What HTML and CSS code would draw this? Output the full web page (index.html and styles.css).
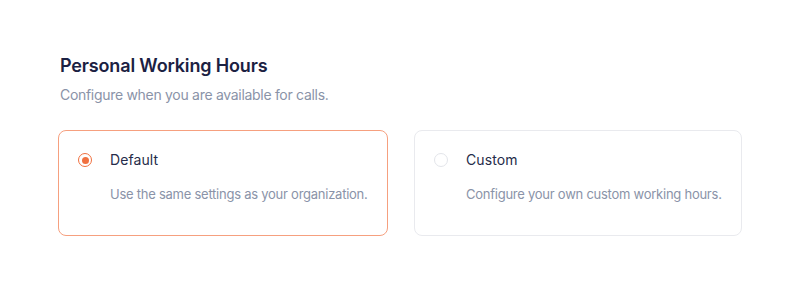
FILE: index.html
```html
<!DOCTYPE html>
<html>
<head>
<meta charset="utf-8">
<link rel="stylesheet" href="styles.css">
</head>
<body>
<main class="page">
  <h1 class="title">Personal Working Hours</h1>
  <p class="subtitle">Configure when you are available for calls.</p>
  <div class="options">
    <div class="card selected">
      <div class="row">
        <span class="radio checked"><span class="dot"></span></span>
        <span class="label">Default</span>
      </div>
      <p class="desc">Use the same settings as your organization.</p>
    </div>
    <div class="card">
      <div class="row">
        <span class="radio"></span>
        <span class="label">Custom</span>
      </div>
      <p class="desc">Configure your own custom working hours.</p>
    </div>
  </div>
</main>
</body>
</html>
```
FILE: styles.css
```css
* { box-sizing: border-box; }
html, body { margin: 0; padding: 0; background: #ffffff; }
body { font-family: Inter, "Noto Sans", sans-serif; }
.page { padding: 54px 58px 0 58px; width: 800px; }
.title {
  margin: 0 0 0 2px;
  font-size: 18px;
  line-height: 24px;
  font-weight: 600;
  color: #1b2142;
  letter-spacing: -0.15px;
}
.subtitle {
  margin: 7px 0 0 2px;
  font-size: 14px;
  line-height: 20px;
  color: #8a93a8;
  letter-spacing: -0.3px;
}
.options {
  margin-top: 25px;
  display: grid;
  grid-template-columns: 330px 328px;
  column-gap: 26px;
}
.card {
  height: 106px;
  border: 1px solid #e9eaee;
  border-radius: 8px;
  padding: 19px 12px 0 19px;
}
.card.selected {
  border: 1.5px solid #f6a07f;
}
.row { display: flex; align-items: center; gap: 18px; height: 20px; }
.radio {
  width: 14px; height: 14px; border-radius: 50%;
  border: 1px solid #e3e5ea;
  display: flex; align-items: center; justify-content: center;
  flex: none;
}
.radio.checked { border: 1.5px solid #f0703f; }
.dot { width: 7px; height: 7px; border-radius: 50%; background: #f0703f; }
.label { font-size: 14px; line-height: 20px; color: #262c4a; font-weight: 400; letter-spacing: 0.1px; }
.desc {
  margin: 14px 0 0 32px;
  font-size: 13px;
  line-height: 20px;
  color: #8a93a8;
  letter-spacing: -0.25px;
  white-space: nowrap;
}
```
